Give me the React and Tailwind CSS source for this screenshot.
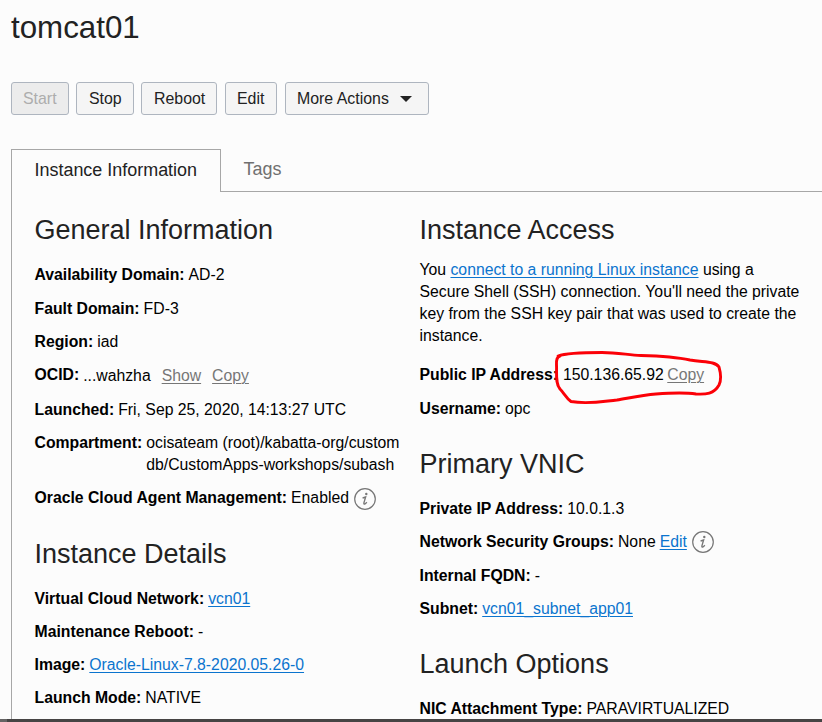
function Button({ className = '', children, disabled }) {
  return (
    <button
      disabled={disabled}
      className={`flex h-[33px] items-center rounded-[3px] border border-[#aeb5bf] pl-[11px] text-[15.9px] ${
        disabled ? 'bg-[#ececec] text-[#adadad]' : 'bg-[#f5f5f5] text-[#222]'
      } ${className}`}
    >
      {children}
    </button>
  );
}

function Heading({ className = '', children }) {
  return (
    <h2 className={`h-9 whitespace-nowrap text-[27px] leading-9 text-[#222] ${className}`}>{children}</h2>
  );
}

function Row({ label, className = '', children }) {
  return (
    <div className={`flex whitespace-nowrap leading-[22px] ${className}`}>
      <span className="shrink-0 font-bold">{label}</span>
      <div className="flex">{children}</div>
    </div>
  );
}

function Link({ className = '', children }) {
  return (
    <a className={`text-[#0b74ce] underline decoration-1 underline-offset-[1.5px] ${className}`}>{children}</a>
  );
}

function GrayLink({ className = '', children }) {
  return <a className={`text-[#767676] underline decoration-1 underline-offset-[1.5px] ${className}`}>{children}</a>;
}

function InfoIcon({ className = '' }) {
  return (
    <svg viewBox="0 0 22 22" className={`h-[22px] w-[22px] shrink-0 ${className}`} fill="none" stroke="#777">
      <circle cx="11" cy="11" r="10.3" strokeWidth="1.2" />
      <circle cx="12.3" cy="6" r="1.2" fill="#777" stroke="none" />
      <path d="M8.600 10 Q10.300 9.500 11.600 9 L9.900 14.900 Q9.600 16.800 11 15.900 L12.900 14.300" strokeWidth="1.35" />
    </svg>
  );
}

export default function App() {
  return (
    <div className="flex h-[722px] w-[822px] flex-col overflow-hidden bg-[#fcfcfc] font-['Liberation_Sans',Arial,sans-serif] text-[15.77px] text-black">
      <h1 className="mt-[8px] h-10 pl-[11px] text-[31.3px] leading-10 text-[#222]">tomcat01</h1>

      <div className="mt-[34px] flex pl-[11px]">
        <Button disabled className="w-[58px]">Start</Button>
        <Button className="ml-[7px] w-[58px] pl-[12px]">Stop</Button>
        <Button className="ml-[7px] w-[76px] pl-[12px]">Reboot</Button>
        <Button className="ml-[8px] w-[52px]">Edit</Button>
        <Button className="ml-[8px] w-[144px]">
          More Actions
          <svg viewBox="0 0 12 6" className="ml-[11px] h-[6px] w-[12px]" fill="#222">
            <path d="M0 0H12L6 6Z" />
          </svg>
        </Button>
      </div>

      <div className="mt-[34px] flex h-[43px] shrink-0 pl-[11px]">
        <div className="w-[210px] border-x border-t border-[#a7a7a7] pl-[22.5px] text-[17.95px] leading-[40px] text-[#222]">
          Instance Information
        </div>
        <div className="flex-1 border-b border-[#a7a7a7] pl-[22.5px] text-[17.95px] leading-[41px] text-[#707070]">
          Tags
        </div>
      </div>

      <div className="ml-[11px] flex h-[527px] shrink-0 overflow-hidden border-l border-[#a7a7a7] pl-[22.5px] pt-5">
        <section className="w-[385px] shrink-0">
          <Heading>General Information</Heading>
          <Row className="mt-[16px]" label="Availability Domain:"><span className="ml-1">AD-2</span></Row>
          <Row className="mt-[12px]" label="Fault Domain:"><span className="ml-1">FD-3</span></Row>
          <Row className="mt-[11px]" label="Region:"><span className="ml-1">iad</span></Row>
          <Row className="mt-[11px]" label="OCID:">
            <span className="ml-[4px] mt-px">...wahzha</span>
            <GrayLink className="ml-[11px] mt-px">Show</GrayLink>
            <GrayLink className="ml-[11px] mt-px">Copy</GrayLink>
          </Row>
          <Row className="mt-[12px]" label="Launched:"><span className="ml-1">Fri, Sep 25, 2020, 14:13:27 UTC</span></Row>
          <Row className="mt-[11px]" label="Compartment:">
            <span className="ml-1">ocisateam (root)/kabatta-org/custom<br />db/CustomApps-workshops/subash</span>
          </Row>
          <Row className="mt-[11px]" label="Oracle Cloud Agent Management:">
            <span className="ml-1">Enabled</span>
            <InfoIcon className="ml-[5px] mt-px" />
          </Row>

          <Heading className="mt-[26px]">Instance Details</Heading>
          <Row className="mt-[16px]" label="Virtual Cloud Network:"><Link className="ml-1">vcn01</Link></Row>
          <Row className="mt-[11px]" label="Maintenance Reboot:"><span className="ml-1">-</span></Row>
          <Row className="mt-[11px]" label="Image:"><Link className="ml-1">Oracle-Linux-7.8-2020.05.26-0</Link></Row>
          <Row className="mt-[11px]" label="Launch Mode:"><span className="ml-1">NATIVE</span></Row>
        </section>

        <section className="flex-1">
          <Heading>Instance Access</Heading>
          <p className="mt-[11px] whitespace-nowrap leading-[22px]">
            You <Link>connect to a running Linux instance</Link> using a<br />
            Secure Shell (SSH) connection. You'll need the private<br />
            key from the SSH key pair that was used to create the<br />
            instance.
          </p>
          <div className="relative">
            <Row className="mt-[17px]" label="Public IP Address:">
              <span className="ml-[5px]">150.136.65.92</span>
              <GrayLink className="ml-[3.5px]">Copy</GrayLink>
            </Row>
            <svg
              viewBox="540 340 200 80"
              className="absolute -top-[24px] left-[120.5px] h-20 w-[200px]"
              fill="none"
              stroke="#fb0007"
              strokeWidth="2.9"
              strokeLinecap="round"
              strokeLinejoin="round"
            >
              <path d="M558 356 C566 353 583 352.500 602 352.500 C618 352.500 628 355 641 355.500 C659 356 676 357 690 360 C704 362.500 715 361 719 367 C721 374 721 381 719 385 C714 394 706 394.500 696 394 C683 392 669 393 656 394 C642 395 629 398 617 400 C602 401.500 588 404.500 571 401.500 C566 398 564 393 560 389 C555 383 557 373 556.500 365 Q556 357 560 356" />
            </svg>
          </div>
          <Row className="mt-[12px]" label="Username:"><span className="ml-1">opc</span></Row>

          <Heading className="mt-[26px]">Primary VNIC</Heading>
          <Row className="mt-[16px]" label="Private IP Address:"><span className="ml-1">10.0.1.3</span></Row>
          <Row className="mt-[11px]" label="Network Security Groups:">
            <span className="ml-1">None</span>
            <Link className="ml-1">Edit</Link>
            <InfoIcon className="ml-[5px]" />
          </Row>
          <Row className="mt-[12px]" label="Internal FQDN:"><span className="ml-1">-</span></Row>
          <Row className="mt-[11px]" label="Subnet:"><Link className="ml-1">vcn01_subnet_app01</Link></Row>

          <Heading className="mt-[26px]">Launch Options</Heading>
          <Row className="mt-[16px]" label="NIC Attachment Type:"><span className="ml-1">PARAVIRTUALIZED</span></Row>
        </section>
      </div>
      <div className="flex h-[3px] shrink-0 bg-[#464444]">
        <div className="w-[7px] bg-[#656464]" />
      </div>
    </div>
  );
}
